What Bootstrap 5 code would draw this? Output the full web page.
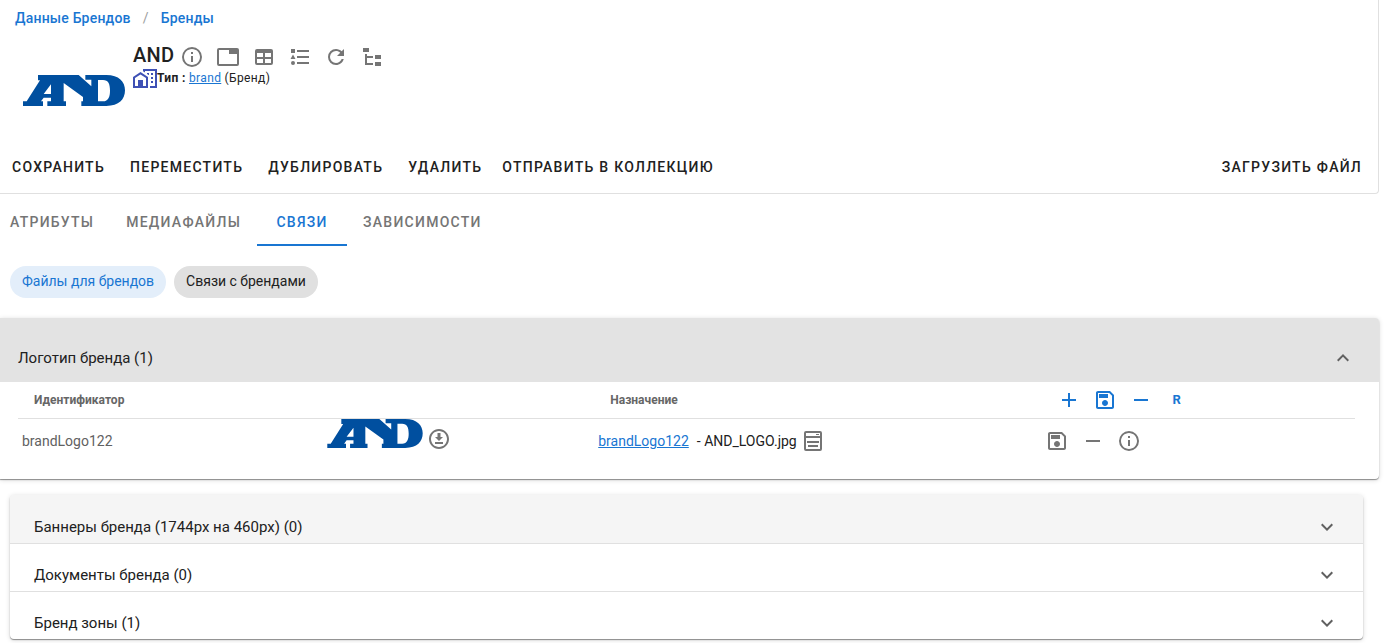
<!DOCTYPE html>
<html lang="ru">
<head>
<meta charset="utf-8">
<meta name="viewport" content="width=device-width, initial-scale=1">
<title>AND – Бренды</title>
<link href="https://cdn.jsdelivr.net/npm/bootstrap@5.3.0/dist/css/bootstrap.min.css" rel="stylesheet">
<style>
:root { --brand-blue: #1976d2; --ink: #212121; --muted: #757575; --line: #e0e0e0; }
body { font-family: Roboto, "Liberation Sans", sans-serif; font-size: 14px; line-height: 20px; color: var(--ink); padding-right: 10px; }
a { color: var(--brand-blue); }
svg { display: block; flex: none; fill: currentColor; }
.icon { width: 24px; height: 24px; }
.icon-button { border: 0; background: none; padding: 0; color: var(--muted); }
.icon-button.primary { color: var(--brand-blue); }
.icon-row { gap: 12px; }

.page-head { border: solid var(--line); border-width: 0 1px 1px 0; border-bottom-right-radius: 4px; padding-bottom: 8px; }
.crumbs { --bs-breadcrumb-divider-color: #9e9e9e; padding: 8px 15px; font-weight: 500; letter-spacing: .015em; }
.crumbs a { text-decoration: none; }
.crumbs .breadcrumb-item + .breadcrumb-item { padding-left: 12px; }
.crumbs .breadcrumb-item + .breadcrumb-item::before { padding-right: 12px; font-weight: 400; }
.entity { padding-left: 23px; gap: 8px; min-height: 113px; }
.entity-logo { width: 102px; height: 31px; margin-top: 39px; fill: #004f9f; }
.entity-info { padding-top: 7px; }
.entity-title { height: 26px; gap: 6px; }
.entity-title h1 { font-size: 20px; line-height: 24px; font-weight: 500; letter-spacing: .0125em; }
.entity-type { font-size: 12px; line-height: 18px; height: 20px; letter-spacing: .03em; }
.entity-type .icon { color: #3f51b5; }

.upper { text-transform: uppercase; font-weight: 500; letter-spacing: .09em; }
.action-bar { padding: 0 6px 0 2px; }
.action-set { gap: 5px; }
.action { border: 0; background: none; color: var(--ink); height: 36px; padding: 0 10px; white-space: nowrap; }

.tab-bar { height: 52px; padding-top: 4px; }
.tab-bar .nav-link { color: var(--muted); min-width: 90px; padding: 0 16px; border-radius: 0; border-bottom: 2px solid transparent; line-height: 48px; height: 48px; }
.tab-bar .nav-item:first-child .nav-link { padding-left: 10px; }
.tab-bar .nav-link.active { color: var(--brand-blue); border-color: var(--brand-blue); }
.chips { padding: 20px 10px; gap: 8px; }
.chip { border: 0; border-radius: 16px; height: 32px; padding: 0 12px 2px; background: var(--line); color: var(--ink); }
.chip.selected { background: #e3eefa; color: var(--brand-blue); }

.panel { background: #fff; border-radius: 4px; box-shadow: 0 1px 1px rgba(0,0,0,.4), 0 1px 5px rgba(0,0,0,.16); overflow: hidden; }
.panel-open { border-top-left-radius: 0; border-bottom-left-radius: 0; margin-bottom: 16px; }
.panel-toggle { border: 0; background: none; color: var(--ink); width: 100%; text-align: left; font-size: 15px; line-height: 20px; padding: 16px 24px 0; height: 48px; }
.panel-toggle .icon { color: #616161; }
.panel-toggle + .panel-toggle { border-top: 1px solid var(--line); }
.panel-toggle.hovered { background: #f5f5f5; }
.panel-open .panel-toggle { height: 64px; background: #e3e3e3; padding-left: 18px; }
.panel-body { padding: 0 24px 16px 18px; }
.links-table { table-layout: fixed; width: 100%; }
.links-table .col-id { width: 22.8%; }
.links-table .col-file { width: 20.3%; }
.links-table .col-target { width: 33.4%; }
.links-table th { height: 36px; padding: 0 16px; font-size: 12px; color: #666; border-bottom: 1px solid var(--line); }
.links-table td { height: 44px; padding: 0 4px; }
.cell-id { color: #616161; }
.file-logo { width: 96px; height: 29px; fill: #004f9f; }
.file-cell { gap: 4px; height: 44px; }
.file-cell .icon-button { padding-top: 8px; }
.letter-mark { width: 24px; font-size: 13px; font-weight: 700; line-height: 24px; }
.panel-group { margin: 0 16px 4px 10px; }
</style>
</head>
<body>
<svg class="d-none" aria-hidden="true">
  <symbol id="logo" viewBox="0 0 306 93"><path fill-rule="evenodd" d="M0 93V79H11L51 16H45V0H167L205 34V14H187V0H250C288 0 306 20 306 46C306 73 288 93 250 93H175V79H180V66L122 24V79H129V93H73V79H84V68H62L54 79H60V93ZM84 28L62 57H84ZM225 15V79H240C256 79 261 65 261 47C261 27 256 15 240 15Z"/></symbol>
  <symbol id="info" viewBox="0 0 24 24"><path d="M11 9H13V7H11M12 20C7.59 20 4 16.41 4 12S7.59 4 12 4 20 7.59 20 12 16.41 20 12 20M12 2A10 10 0 0 0 2 12 10 10 0 0 0 12 22 10 10 0 0 0 22 12 10 10 0 0 0 12 2M11 17H13V11H11V17Z"/></symbol>
  <symbol id="tab" viewBox="0 0 24 24"><path d="M21 3H3A2 2 0 0 0 1 5V19A2 2 0 0 0 3 21H21A2 2 0 0 0 23 19V5A2 2 0 0 0 21 3M21 19H3V5H13V9H21V19Z"/></symbol>
  <symbol id="grid" viewBox="0 0 24 24"><path d="M5 4H19A2 2 0 0 1 21 6V18A2 2 0 0 1 19 20H5A2 2 0 0 1 3 18V6A2 2 0 0 1 5 4M5 8V12H11V8H5M13 8V12H19V8H13M5 14V18H11V14H5M13 14V18H19V14H13Z"/></symbol>
  <symbol id="list" viewBox="0 0 24 24"><path d="M5 9.5L7.5 14H2.5L5 9.5M3 4H7V8H3V4M5 20A2 2 0 0 0 7 18 2 2 0 0 0 5 16 2 2 0 0 0 3 18 2 2 0 0 0 5 20M9 5V7H21V5H9M9 19H21V17H9V19M9 13H21V11H9V13Z"/></symbol>
  <symbol id="refresh" viewBox="0 0 24 24"><path d="M17.65 6.35C16.2 4.9 14.21 4 12 4A8 8 0 0 0 4 12 8 8 0 0 0 12 20C15.73 20 18.84 17.45 19.73 14H17.65C16.83 16.33 14.61 18 12 18A6 6 0 0 1 6 12 6 6 0 0 1 12 6C13.66 6 15.14 6.69 16.22 7.78L13 11H20V4L17.65 6.35Z"/></symbol>
  <symbol id="tree" viewBox="0 0 24 24"><path d="M3 3H9V7H3V3M15 10H21V14H15V10M15 17H21V21H15V17M13 13H7V18H13V20H5V9H7V11H13V13Z"/></symbol>
  <symbol id="city" viewBox="0 0 24 24"><path d="M10 2V4.26L12 5.59V4H22V19H17V21H24V2H10M7.5 5L0 10V21H15V10L7.5 5M14 6V6.93L15.61 8H16V6H14M18 6V8H20V6H18M7.5 7.5L13 11V19H10V13H5V19H2V11L7.5 7.5M18 10V12H20V10H18M18 14V16H20V14H18Z"/></symbol>
  <symbol id="plus" viewBox="0 0 24 24"><path d="M19 13H13V19H11V13H5V11H11V5H13V11H19V13Z"/></symbol>
  <symbol id="minus" viewBox="0 0 24 24"><path d="M19 13H5V11H19V13Z"/></symbol>
  <symbol id="save" viewBox="0 0 24 24"><path d="M17 3H5C3.89 3 3 3.9 3 5V19C3 20.1 3.89 21 5 21H19C20.1 21 21 20.1 21 19V7L17 3M19 19H5V5H16.17L19 7.83V19M12 12C10.34 12 9 13.34 9 15S10.34 18 12 18 15 16.66 15 15 13.66 12 12 12M6 6H15V10H6V6Z"/></symbol>
  <symbol id="download" viewBox="0 0 24 24"><path d="M8 17V15H16V17H8M16 10L12 14L8 10H10.5V6H13.5V10H16M12 2C17.5 2 22 6.5 22 12S17.5 22 12 22 2 17.5 2 12 6.5 2 12 2M12 4C7.58 4 4 7.58 4 12S7.58 20 12 20 20 16.42 20 12 16.42 4 12 4Z"/></symbol>
  <symbol id="form" viewBox="0 0 24 24"><path fill-rule="evenodd" d="M5 2H19A2 2 0 0 1 21 4V20A2 2 0 0 1 19 22H5A2 2 0 0 1 3 20V4A2 2 0 0 1 5 2ZM5 4V7H19V4ZM5 9V20H19V9ZM15 5H18V6H15ZM6 12H18V14H6ZM7 16H17V18H7Z"/></symbol>
  <symbol id="down" viewBox="0 0 24 24"><path d="M7.41 8.58L12 13.17L16.59 8.58L18 10L12 16L6 10L7.41 8.58Z"/></symbol>
  <symbol id="up" viewBox="0 0 24 24"><path d="M7.41 15.41L12 10.83L16.59 15.41L18 14L12 8L6 14L7.41 15.41Z"/></symbol>
</svg>

<header class="page-head">
  <nav aria-label="Навигация">
    <ol class="breadcrumb crumbs mb-0">
      <li class="breadcrumb-item"><a href="#">Данные Брендов</a></li>
      <li class="breadcrumb-item"><a href="#">Бренды</a></li>
    </ol>
  </nav>
  <div class="entity d-flex">
    <svg class="entity-logo" role="img" aria-label="AND"><use href="#logo"/></svg>
    <div class="entity-info">
      <div class="entity-title d-flex">
        <h1 class="mb-0">AND</h1>
        <div class="icon-row d-flex align-items-end">
          <button class="icon-button" aria-label="Информация"><svg class="icon"><use href="#info"/></svg></button>
          <button class="icon-button" aria-label="Вкладка"><svg class="icon"><use href="#tab"/></svg></button>
          <button class="icon-button" aria-label="Таблица"><svg class="icon"><use href="#grid"/></svg></button>
          <button class="icon-button" aria-label="Список"><svg class="icon"><use href="#list"/></svg></button>
          <button class="icon-button" aria-label="Обновить"><svg class="icon"><use href="#refresh"/></svg></button>
          <button class="icon-button" aria-label="Дерево"><svg class="icon"><use href="#tree"/></svg></button>
        </div>
      </div>
      <div class="entity-type d-flex">
        <svg class="icon align-self-center" aria-hidden="true"><use href="#city"/></svg>
        <span><b>Тип :</b> <a href="#">brand</a> (Бренд)</span>
      </div>
    </div>
  </div>
  <div class="action-bar d-flex">
    <div class="action-set d-flex">
      <button class="action upper">Сохранить</button>
      <button class="action upper">Переместить</button>
      <button class="action upper">Дублировать</button>
      <button class="action upper">Удалить</button>
    </div>
    <button class="action upper">Отправить в коллекцию</button>
    <button class="action upper ms-auto">Загрузить файл</button>
  </div>
</header>

<main>
  <ul class="nav tab-bar">
    <li class="nav-item"><a class="nav-link upper" href="#">Атрибуты</a></li>
    <li class="nav-item"><a class="nav-link upper" href="#">Медиафайлы</a></li>
    <li class="nav-item"><a class="nav-link upper active text-center" aria-current="page" href="#">Связи</a></li>
    <li class="nav-item"><a class="nav-link upper" href="#">Зависимости</a></li>
  </ul>
  <div class="chips d-flex">
    <button class="chip selected">Файлы для брендов</button>
    <button class="chip">Связи с брендами</button>
  </div>

  <section class="panel panel-open">
    <button class="panel-toggle d-flex align-items-center justify-content-between" aria-expanded="true">Логотип бренда (1)<svg class="icon"><use href="#up"/></svg></button>
    <div class="panel-body">
      <table class="links-table">
        <colgroup><col class="col-id"><col class="col-file"><col class="col-target"><col></colgroup>
        <thead>
          <tr>
            <th scope="col">Идентификатор</th>
            <th></th>
            <th scope="col">Назначение</th>
            <th>
              <div class="icon-row d-flex">
                <button class="icon-button primary" aria-label="Добавить"><svg class="icon"><use href="#plus"/></svg></button>
                <button class="icon-button primary" aria-label="Сохранить все"><svg class="icon"><use href="#save"/></svg></button>
                <button class="icon-button primary" aria-label="Удалить все"><svg class="icon"><use href="#minus"/></svg></button>
                <button class="icon-button primary letter-mark">R</button>
              </div>
            </th>
          </tr>
        </thead>
        <tbody>
          <tr>
            <td class="cell-id">brandLogo122</td>
            <td>
              <div class="file-cell d-flex align-items-start">
                <svg class="file-logo" role="img" aria-label="AND"><use href="#logo"/></svg>
                <button class="icon-button" aria-label="Скачать"><svg class="icon"><use href="#download"/></svg></button>
              </div>
            </td>
            <td>
              <div class="d-flex align-items-center">
                <a href="#">brandLogo122</a><span class="ms-2">- AND_LOGO.jpg</span>
                <button class="icon-button ms-1" aria-label="Карточка"><svg class="icon"><use href="#form"/></svg></button>
              </div>
            </td>
            <td>
              <div class="icon-row d-flex">
                <button class="icon-button" aria-label="Сохранить"><svg class="icon"><use href="#save"/></svg></button>
                <button class="icon-button" aria-label="Удалить"><svg class="icon"><use href="#minus"/></svg></button>
                <button class="icon-button" aria-label="Информация"><svg class="icon"><use href="#info"/></svg></button>
              </div>
            </td>
          </tr>
        </tbody>
      </table>
    </div>
  </section>

  <section class="panel panel-group">
    <button class="panel-toggle hovered d-flex align-items-center justify-content-between" aria-expanded="false">Баннеры бренда (1744px на 460px) (0)<svg class="icon"><use href="#down"/></svg></button>
    <button class="panel-toggle d-flex align-items-center justify-content-between" aria-expanded="false">Документы бренда (0)<svg class="icon"><use href="#down"/></svg></button>
    <button class="panel-toggle d-flex align-items-center justify-content-between" aria-expanded="false">Бренд зоны (1)<svg class="icon"><use href="#down"/></svg></button>
  </section>
</main>
<script src="https://cdn.jsdelivr.net/npm/bootstrap@5.3.0/dist/js/bootstrap.bundle.min.js"></script>
</body>
</html>
